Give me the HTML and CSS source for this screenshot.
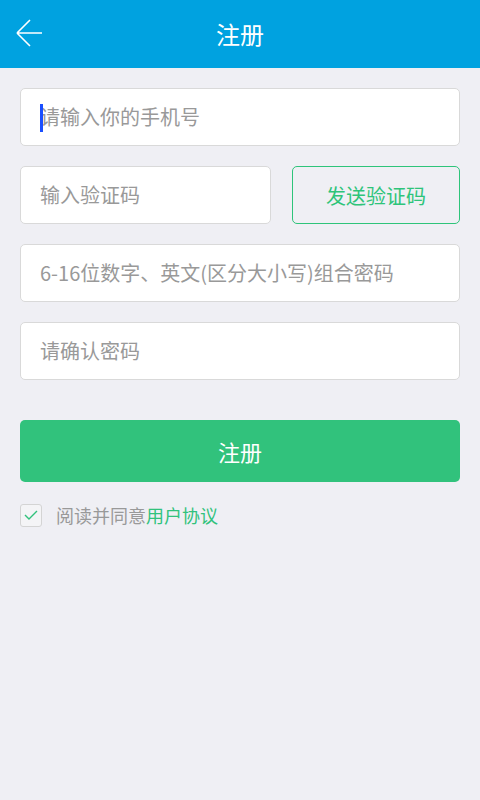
FILE: index.html
```html
<!DOCTYPE html>
<html lang="zh">
<head>
<meta charset="utf-8">
<link rel="stylesheet" href="styles.css">
</head>
<body>
<header class="topbar">
  <svg class="back" width="30" height="30" viewBox="0 0 30 30">
    <path d="M2 15 H27 M2 15 L15 2 M2 15 L15 28" fill="none" stroke="#fff" stroke-width="1.6"/>
  </svg>
  <h1 class="title">注册</h1>
</header>
<main class="form">
  <div class="field"><span class="cursor"></span><span class="ph">请输入你的手机号</span></div>
  <div class="row">
    <div class="field code"><span class="ph">输入验证码</span></div>
    <div class="send">发送验证码</div>
  </div>
  <div class="field"><span class="ph">6-16位数字、英文(区分大小写)组合密码</span></div>
  <div class="field"><span class="ph">请确认密码</span></div>
  <div class="submit">注册</div>
  <div class="agree">
    <span class="box">
      <svg width="14" height="10" viewBox="0 0 14 10"><path d="M1 5 L5 9 L13 1" fill="none" stroke="#31c27c" stroke-width="1.4"/></svg>
    </span>
    <span class="agree-text">阅读并同意<span class="link">用户协议</span></span>
  </div>
</main>
</body>
</html>
```
FILE: styles.css
```css
* { box-sizing: border-box; }
html, body { margin: 0; padding: 0; }
body {
  width: 480px;
  height: 800px;
  background: #efeff4;
  font-family: "Noto Sans CJK SC", "Noto Sans", sans-serif;
}
.topbar {
  height: 68px;
  background: #00a2e0;
  display: flex;
  align-items: center;
  justify-content: center;
  position: relative;
}
.back {
  position: absolute;
  left: 15px;
  top: 18px;
}
.title {
  margin: 0;
  color: #fff;
  font-size: 24px;
  font-weight: normal;
  line-height: 1;
}
.form {
  padding: 20px 20px 0;
  display: flex;
  flex-direction: column;
}
.field {
  height: 58px;
  background: #fff;
  border: 1px solid #d9d9d9;
  border-radius: 5px;
  display: flex;
  align-items: center;
  padding-left: 19px;
  margin-bottom: 20px;
  position: relative;
}
.ph {
  color: #999;
  font-size: 20px;
  line-height: 1;
}
.cursor {
  position: absolute;
  left: 19px;
  top: 15px;
  width: 3px;
  height: 28px;
  background: #1a4fff;
}
.row {
  display: flex;
  gap: 21px;
}
.code { flex: 0 0 251px; }
.send {
  flex: 1;
  height: 58px;
  border: 1px solid #2ec47a;
  border-radius: 5px;
  color: #2ec47a;
  font-size: 20px;
  display: flex;
  align-items: center;
  justify-content: center;
}
.submit {
  margin-top: 20px;
  height: 62px;
  background: #31c27c;
  border-radius: 5px;
  color: #fff;
  font-size: 22px;
  display: flex;
  align-items: center;
  justify-content: center;
}
.agree {
  margin-top: 20px;
  display: flex;
  align-items: center;
  gap: 14px;
}
.box {
  width: 22px;
  height: 23px;
  border: 1px solid #d4d4d4;
  border-radius: 3px;
  background: #f4f4f6;
  display: flex;
  align-items: center;
  justify-content: center;
}
.agree-text {
  color: #999;
  font-size: 18px;
}
.link { color: #31c27c; }
```
